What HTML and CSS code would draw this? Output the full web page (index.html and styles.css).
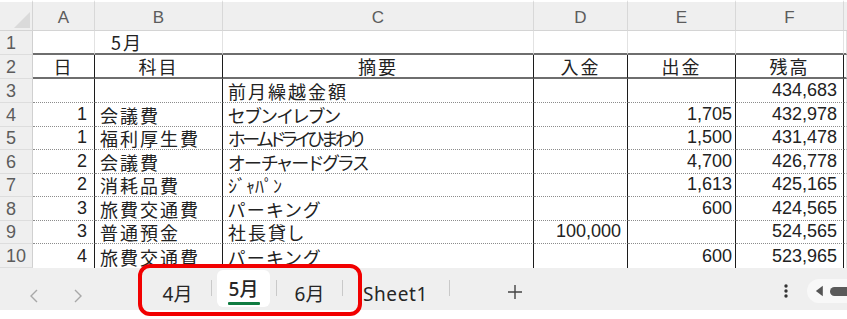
FILE: index.html
```html
<!DOCTYPE html>
<html lang="ja">
<head>
<meta charset="utf-8">
<title>5月</title>
<link rel="stylesheet" href="styles.css">
</head>
<body>
<div class="app">
  <div class="sheet">
    <div class="row">
      <div class="corner"><svg width="16" height="16" viewBox="0 0 16 16"><path d="M16 0 L16 16 L0 16 Z" fill="#dadada"/></svg></div>
      <div class="ch">A</div><div class="ch">B</div><div class="ch">C</div><div class="ch">D</div><div class="ch">E</div><div class="ch">F</div><div class="ch end"></div>
    </div>
    <div class="row r1">
      <div class="rh">1</div>
      <div class="c"></div><div class="c title">5月</div><div class="c"></div><div class="c"></div><div class="c"></div><div class="c"></div><div class="c end"></div>
    </div>
    <div class="row r2">
      <div class="rh">2</div>
      <div class="c ctr">日</div><div class="c ctr">科目</div><div class="c ctr">摘要</div><div class="c ctr">入金</div><div class="c ctr">出金</div><div class="c ctr">残高</div><div class="c end"></div>
    </div>
    <div class="row">
      <div class="rh">3</div>
      <div class="c"></div><div class="c"></div><div class="c txt">前月繰越金額</div><div class="c num"></div><div class="c num"></div><div class="c num f">434,683</div><div class="c end"></div>
    </div>
    <div class="row">
      <div class="rh">4</div>
      <div class="c num a">1</div><div class="c txt">会議費</div><div class="c txt kana">セブンイレブン</div><div class="c num d"></div><div class="c num e">1,705</div><div class="c num f">432,978</div><div class="c end"></div>
    </div>
    <div class="row">
      <div class="rh">5</div>
      <div class="c num a">1</div><div class="c txt">福利厚生費</div><div class="c txt kana-tight">ホームドライひまわり</div><div class="c num d"></div><div class="c num e">1,500</div><div class="c num f">431,478</div><div class="c end"></div>
    </div>
    <div class="row">
      <div class="rh">6</div>
      <div class="c num a">2</div><div class="c txt">会議費</div><div class="c txt kana-mid">オーチャードグラス</div><div class="c num d"></div><div class="c num e">4,700</div><div class="c num f">426,778</div><div class="c end"></div>
    </div>
    <div class="row">
      <div class="rh">7</div>
      <div class="c num a">2</div><div class="c txt">消耗品費</div><div class="c txt half">ｼﾞｬﾊﾟﾝ</div><div class="c num d"></div><div class="c num e">1,613</div><div class="c num f">425,165</div><div class="c end"></div>
    </div>
    <div class="row">
      <div class="rh">8</div>
      <div class="c num a">3</div><div class="c txt">旅費交通費</div><div class="c txt">パーキング</div><div class="c num d"></div><div class="c num e">600</div><div class="c num f">424,565</div><div class="c end"></div>
    </div>
    <div class="row">
      <div class="rh">9</div>
      <div class="c num a">3</div><div class="c txt">普通預金</div><div class="c txt">社長貸し</div><div class="c num d">100,000</div><div class="c num e"></div><div class="c num f">524,565</div><div class="c end"></div>
    </div>
    <div class="row last">
      <div class="rh">10</div>
      <div class="c num a">4</div><div class="c txt">旅費交通費</div><div class="c txt">パーキング</div><div class="c num d"></div><div class="c num e">600</div><div class="c num f">523,965</div><div class="c end"></div>
    </div>
  </div>

  <div class="tabbar">
    <div class="nav">
      <svg width="10" height="16" viewBox="0 0 10 16"><path d="M8 2 L2 8 L8 14" fill="none" stroke="#a8a8a8" stroke-width="1.4"/></svg>
      <svg width="10" height="16" viewBox="0 0 10 16"><path d="M2 2 L8 8 L2 14" fill="none" stroke="#a8a8a8" stroke-width="1.4"/></svg>
    </div>
    <div class="tab t4">4月</div>
    <div class="sep"></div>
    <div class="tab active"><span class="label">5月</span><span class="underline"></span></div>
    <div class="sep"></div>
    <div class="tab t6">6月</div>
    <div class="sep"></div>
    <div class="tab tsheet">Sheet1</div>
    <div class="sep"></div>
    <div class="add"><svg width="16" height="16" viewBox="0 0 16 16"><path d="M8 1 V15 M1 8 H15" stroke="#444" stroke-width="1.4"/></svg></div>
    <div class="spacer"></div>
    <div class="kebab"><svg width="6" height="14" viewBox="0 0 6 14"><circle cx="3" cy="2" r="1.7" fill="#333"/><circle cx="3" cy="7" r="1.7" fill="#333"/><circle cx="3" cy="12" r="1.7" fill="#333"/></svg></div>
    <div class="scroll">
      <svg width="10" height="12" viewBox="0 0 10 12"><path d="M9 0 V12 L1 6 Z" fill="#555"/></svg>
      <span class="thumb"></span>
    </div>
  </div>

  <div class="highlight"></div>
</div>
</body>
</html>
```

FILE: styles.css
```css
* { box-sizing: border-box; }

body {
  margin: 0;
  background: #ffffff;
}

.app {
  position: relative;
  width: 847px;
  height: 319px;
  overflow: hidden;
  background: #ffffff;
}

.sheet {
  display: grid;
  grid-template-columns: 33px 62px 128px 311px 94px 108px 108px 3px;
  grid-template-rows: 31px 24px 24px 24px 24px 23px 24px 23px 24px 23px 24px;
}

.row { display: contents; }

.corner {
  background: #efefef;
  border-top: 2px solid #ffffff;
  border-right: 1px solid #d4d4d4;
  border-bottom: 1px solid #d4d4d4;
  display: flex;
  align-items: flex-end;
  justify-content: flex-end;
  padding: 0 2px 2px 0;
}

.ch {
  background: #efefef;
  border-top: 2px solid #ffffff;
  border-right: 1px solid #d8d8d8;
  border-bottom: 1px solid #d4d4d4;
  font: 17px "Liberation Sans", Arial, sans-serif;
  color: #5c5c5c;
  display: flex;
  align-items: center;
  justify-content: center;
  padding-top: 3px;
}
.ch.end { border-right: none; }

.rh {
  background: #efefef;
  border-right: 1px solid #d0d0d0;
  border-bottom: 1px solid #dddddd;
  font: 18px "Liberation Sans", Arial, sans-serif;
  color: #5c5c5c;
  display: flex;
  align-items: center;
  padding-left: 6px;
  padding-top: 1px;
}

.c {
  border-right: 1px solid #1c1c1c;
  border-bottom: 1px dotted #8c8c8c;
  font: 18px "Noto Sans CJK JP", "Liberation Sans", sans-serif;
  letter-spacing: 2px;
  color: #222222;
  display: flex;
  align-items: flex-end;
  line-height: 22px;
  white-space: nowrap;
  overflow: visible;
}
.c.end { border-right: 1px solid #e2e2e2; }

.r1 .c {
  border-right: 1px solid #e2e2e2;
  border-bottom: 2px solid #6e6e6e;
}
.r2 .c {
  border-bottom: 2px solid #6e6e6e;
  justify-content: center;
}
.r2 .c.end { border-right: 1px solid #e2e2e2; }
.last .c { border-bottom: none; }

.title { padding-left: 16px; }

.txt {
  padding-left: 5px;
  font-feature-settings: "palt";
}
.kana { letter-spacing: 0; }
.kana-mid { letter-spacing: -0.5px; }
.kana-tight { letter-spacing: -3px; }
.half { letter-spacing: 0; }

.num {
  justify-content: flex-end;
  font-family: "Liberation Sans", Arial, sans-serif;
  letter-spacing: 0;
  padding-bottom: 1px;
}
.num.a { padding-right: 7px; }
.num.d { padding-right: 6px; }
.num.e { padding-right: 3px; }
.num.f { padding-right: 6px; }

/* tab bar */
.tabbar {
  height: 42px;
  background: #efefef;
  display: flex;
  align-items: center;
}

.nav {
  width: 144px;
  display: flex;
  align-items: center;
  gap: 34px;
  padding-left: 29px;
  padding-top: 14px;
  align-self: stretch;
}

.tab {
  font: 19px "Noto Sans", "Noto Sans CJK JP", sans-serif;
  color: #262626;
  text-align: center;
  padding-top: 9px;
  line-height: 26px;
  align-self: stretch;
  display: flex;
  align-items: center;
  justify-content: center;
}
.t4 { width: 67px; }
.t6 { width: 65px; }
.tsheet { padding-left: 20px; padding-right: 21px; letter-spacing: 0.6px; }

.tab.active {
  width: 53px;
  height: 37px;
  margin: 2px 6px 0 5px;
  align-self: flex-start;
  background: #ffffff;
  border-radius: 6px;
  flex-direction: column;
  justify-content: flex-start;
  padding-top: 6px;
  font-weight: 500;
}
.label { line-height: 26px; }
.underline {
  display: block;
  width: 32px;
  height: 3px;
  background: #107c41;
  border-radius: 1px;
}

.sep {
  width: 1px;
  height: 16px;
  background: #c9c9c9;
  margin-top: -2px;
}

.add {
  width: 130px;
  display: flex;
  justify-content: center;
  padding-top: 5px;
}

.spacer { flex: 1; }

.kebab {
  display: flex;
  padding-top: 4px;
  margin-right: 18px;
}

.scroll {
  width: 40px;
  height: 24px;
  margin-top: 4px;
  background: #f8f8f8;
  border-radius: 12px 0 0 12px;
  display: flex;
  align-items: center;
  padding-left: 8px;
  gap: 6px;
}
.thumb {
  display: block;
  width: 20px;
  height: 9px;
  border-radius: 5px 0 0 5px;
  background: #5a5a5a;
}

.highlight {
  position: absolute;
  left: 138px;
  top: 264px;
  width: 224px;
  height: 52px;
  border: 4px solid #f20000;
  border-radius: 12px;
}
```
